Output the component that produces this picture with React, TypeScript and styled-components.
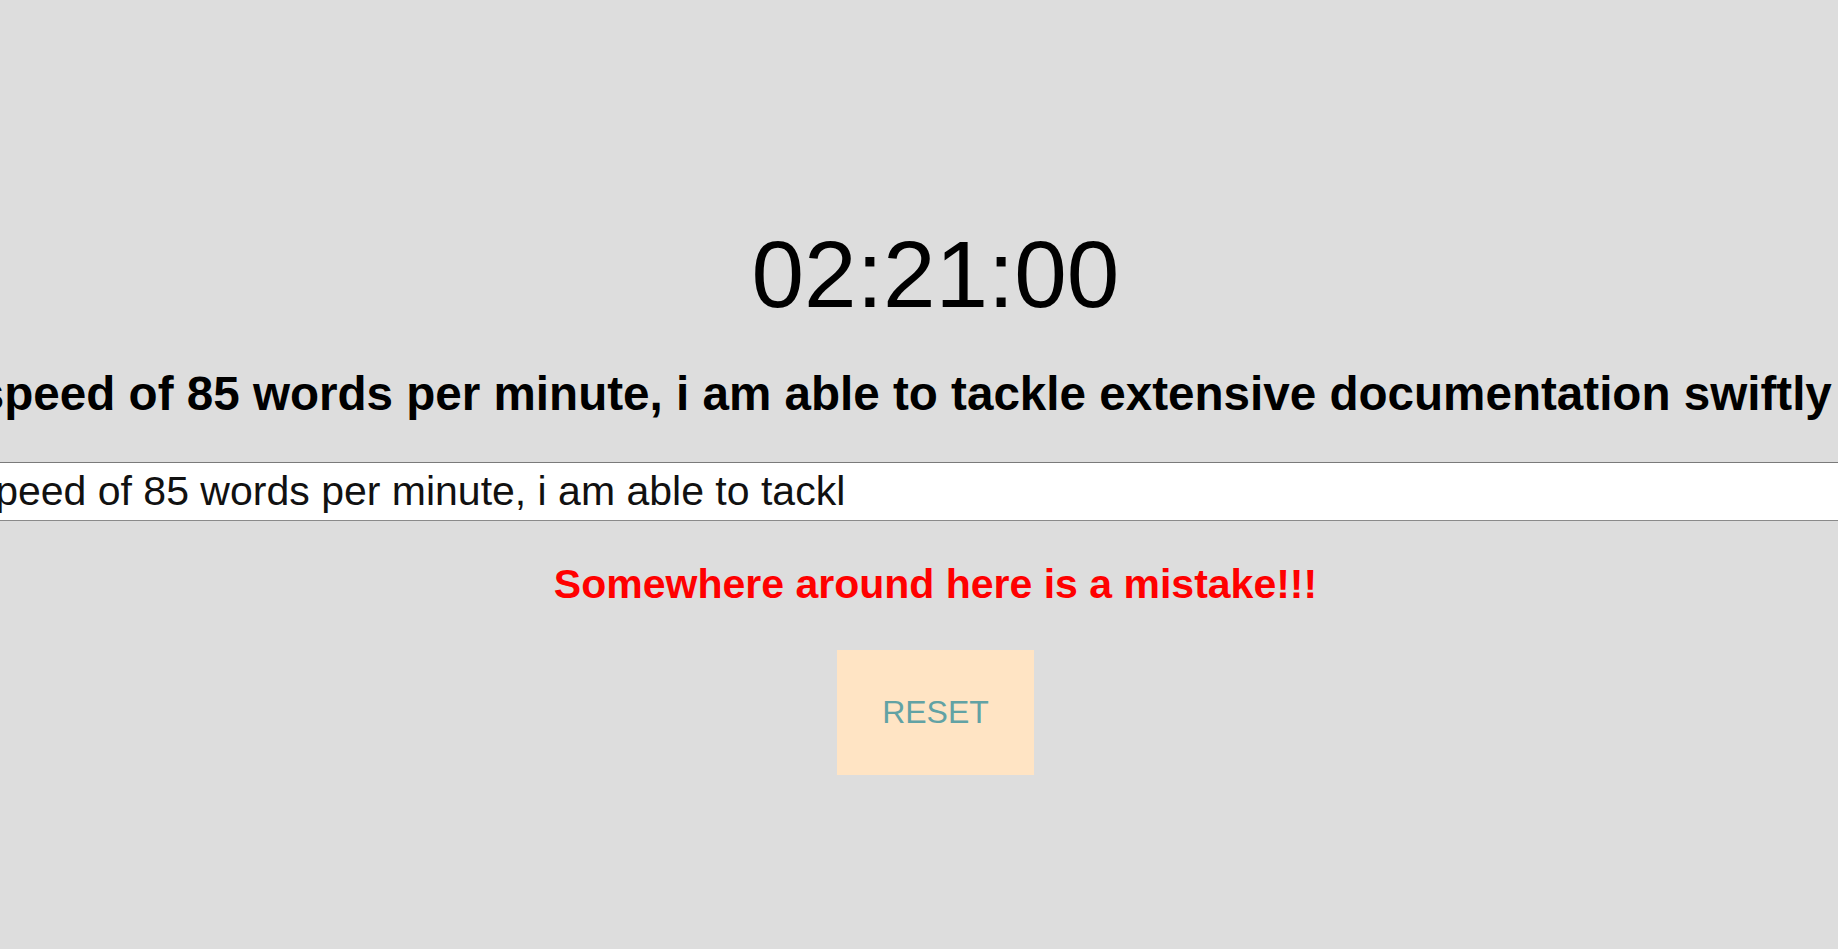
import React, { useState } from "react";
import styled, { createGlobalStyle } from "styled-components";

const GlobalStyle = createGlobalStyle`
  html, body {
    margin: 0;
    padding: 0;
    background: #dddddd;
    overflow: hidden;
  }
  body {
    font-family: "Liberation Sans", Arial, Helvetica, sans-serif;
  }
`;

const Page = styled.main`
  display: flex;
  flex-direction: column;
  align-items: center;
  box-sizing: border-box;
  min-height: 100vh;
  padding: 220px 0 0 33px;
  overflow: hidden;
`;

const Timer = styled.div`
  font-size: 94.5px;
  line-height: normal;
  color: #000;
`;

const Prompt = styled.h2`
  margin: 37px 0 0;
  font-size: 47.6px;
  font-weight: 700;
  line-height: normal;
  white-space: nowrap;
  color: #000;
`;

const TypeInput = styled.input`
  flex-shrink: 0;
  box-sizing: border-box;
  width: 2356px;
  margin-top: 41px;
  padding: 5px 2px;
  border: 1px solid #8a8a8a;
  border-top-color: #7a7a7a;
  background: #ffffff;
  color: #111;
  font-family: "Liberation Sans", Arial, sans-serif;
  font-size: 41px;
  line-height: normal;
  outline: none;
`;

const ErrorText = styled.p`
  margin: 40px 0 0;
  font-size: 41px;
  font-weight: 700;
  line-height: normal;
  color: #ff0000;
`;

const ResetButton = styled.button`
  margin-top: 42px;
  padding: 44px 45px;
  border: none;
  background: #ffe4c4;
  color: #62a2a4;
  font-family: "Liberation Sans", Arial, sans-serif;
  font-size: 32px;
  line-height: normal;
  cursor: pointer;
`;

const SENTENCE =
  "With typing speed of 85 words per minute, i am able to tackle extensive documentation swiftly and efficiently";

export default function App() {
  const [typed, setTyped] = useState(
    "With typing speed of 85 words per minute, i am able to tackl"
  );

  return (
    <>
      <GlobalStyle />
      <Page>
        <Timer>02:21:00</Timer>
        <Prompt>{SENTENCE}</Prompt>
        <TypeInput
          type="text"
          value={typed}
          onChange={(e) => setTyped(e.target.value)}
        />
        <ErrorText>Somewhere around here is a mistake!!!</ErrorText>
        <ResetButton onClick={() => setTyped("")}>RESET</ResetButton>
      </Page>
    </>
  );
}
